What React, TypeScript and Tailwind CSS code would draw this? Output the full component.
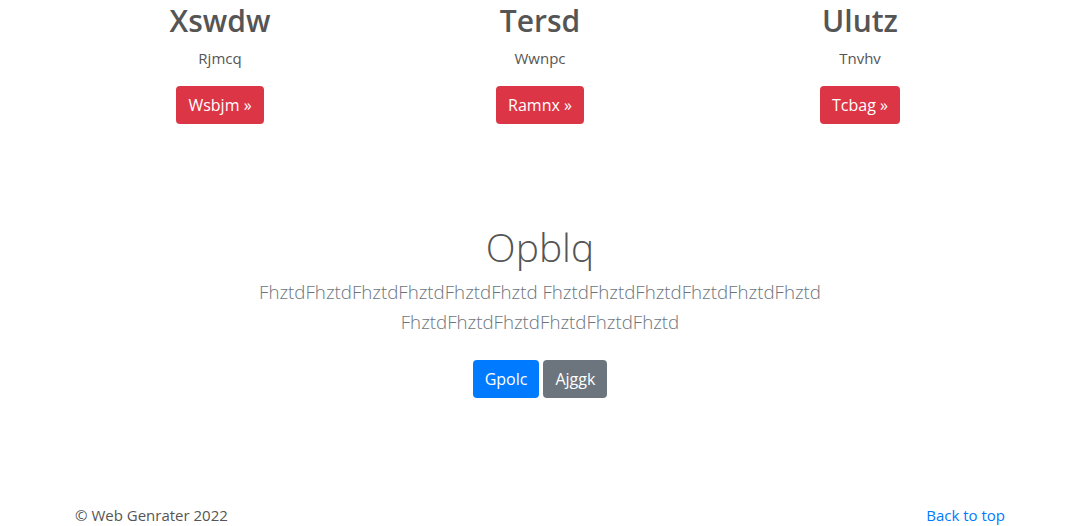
const features = [
  { title: 'Xswdw', text: 'Rjmcq', cta: 'Wsbjm' },
  { title: 'Tersd', text: 'Wwnpc', cta: 'Ramnx' },
  { title: 'Ulutz', text: 'Tnvhv', cta: 'Tcbag' },
];

export default function App() {
  return (
    <div className="min-h-[526px] bg-white text-[#555] font-['Open_Sans',sans-serif]">
      <div className="mx-auto w-[960px]">
        <div className="grid grid-cols-3">
          {features.map((f) => (
            <div key={f.title} className="flex flex-col items-center px-[15px] text-center">
              <h2 className="pt-[2px] text-[30px] font-semibold leading-[38px] mb-[6px]">{f.title}</h2>
              <p className="text-[15px] leading-6 mb-4">{f.text}</p>
              <a className="inline-block rounded bg-[#dc3545] px-3 py-[7px] text-base leading-6 text-white">
                {f.cta} &raquo;
              </a>
            </div>
          ))}
        </div>
      </div>

      <section className="mt-[99px] text-center">
        <div className="mx-auto w-[610px]">
          <h1 className="text-[39px] font-light leading-[48px] mb-[6px]">Opblq</h1>
          <p className="text-[18.7px] font-light leading-[30px] text-[#6c757d] mb-[23px]">
            FhztdFhztdFhztdFhztdFhztdFhztd FhztdFhztdFhztdFhztdFhztdFhztd FhztdFhztdFhztdFhztdFhztdFhztd
          </p>
          <div className="flex justify-center gap-1">
            <a className="inline-block rounded bg-[#007bff] px-3 py-[7px] text-base leading-6 text-white">Gpolc</a>
            <a className="inline-block rounded bg-[#6c757d] px-3 py-[7px] text-base leading-6 text-white">Ajggk</a>
          </div>
        </div>
      </section>

      <footer className="mt-[105px] mx-auto w-[960px] px-[15px] flex justify-between text-[15px] leading-6 text-[#555]">
        <p>&copy; Web Genrater 2022</p>
        <a className="text-[#007bff]">Back to top</a>
      </footer>
    </div>
  );
}
